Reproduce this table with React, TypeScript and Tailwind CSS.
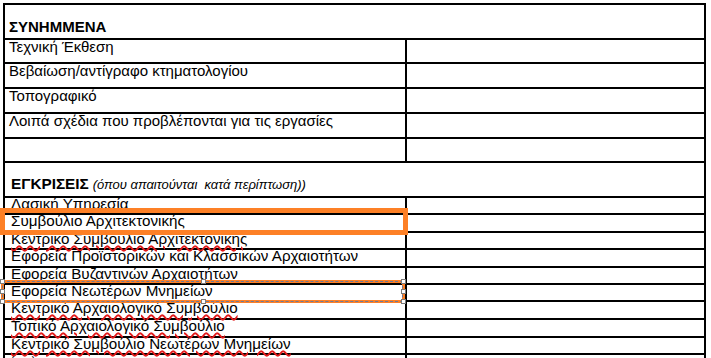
import React from "react";

const attachments = [
  { label: "Τεχνική Έκθεση", h: "h-[24px]" },
  { label: "Βεβαίωση/αντίγραφο κτηματολογίου", h: "h-[25px]" },
  { label: "Τοπογραφικό", h: "h-[25px]" },
  { label: "Λοιπά σχέδια που προβλέπονται για τις εργασίες", h: "h-[25px]" },
  { label: "", h: "h-[24px]" },
];

const approvals = [
  { label: "Δασική Υπηρεσία", h: "h-[17px]", typo: false },
  { label: "Συμβούλιο Αρχιτεκτονικής", h: "h-[18px]", typo: false },
  { label: "Κεντρικό Συμβούλιο Αρχιτεκτονικής", h: "h-[17px]", typo: true },
  { label: "Εφορεία Προϊστορικών και Κλασσικών Αρχαιοτήτων", h: "h-[18px]", typo: false },
  { label: "Εφορεία Βυζαντινών Αρχαιοτήτων", h: "h-[17px]", typo: false },
  { label: "Εφορεία Νεωτέρων Μνημείων", h: "h-[17px]", typo: false },
  { label: "Κεντρικό Αρχαιολογικό Συμβούλιο", h: "h-[18px]", typo: true },
  { label: "Τοπικό Αρχαιολογικό Συμβούλιο", h: "h-[18px]", typo: true },
  { label: "Κεντρικό Συμβούλιο Νεωτέρων Μνημείων", h: "h-[17px]", typo: true },
];

// little white squares of the selected shape
const handles = [
  "left-[0px] top-[279px]",
  "left-[201px] top-[279px]",
  "left-[401px] top-[279px]",
  "left-[0px] top-[289px]",
  "left-[401px] top-[289px]",
  "left-[0px] top-[299px]",
  "left-[201px] top-[299px]",
  "left-[401px] top-[299px]",
];

export default function App() {
  return (
    <div className="relative w-[711px] h-[358px] overflow-hidden bg-white text-black font-['Liberation_Sans',Arial,sans-serif]">
      <div className="ml-[3px] mt-[3px] w-[703px] border-x-2 border-t-2 border-black">
        {/* ΣΥΝΗΜΜΕΝΑ */}
        <div className="h-[35px] border-b-2 border-black flex items-end pl-[4px] pb-[4px]">
          <span className="text-[15px] font-bold leading-none">ΣΥΝΗΜΜΕΝΑ</span>
        </div>
        {attachments.map((row, i) => (
          <div key={i} className={`${row.h} grid grid-cols-[400px_1fr] border-b-2 border-black`}>
            <div className="pl-[4px] text-[15px] leading-[14px] whitespace-nowrap">{row.label}</div>
            <div className="border-l-2 border-black" />
          </div>
        ))}

        {/* ΕΓΚΡΙΣΕΙΣ */}
        <div className="h-[35px] border-b-2 border-black flex items-end pl-[6px] pb-[5px]">
          <span className="text-[15.3px] font-bold leading-none">ΕΓΚΡΙΣΕΙΣ</span>
          <span className="ml-[4px] text-[13px] italic leading-none whitespace-pre">
            (όπου απαιτούνται  κατά περίπτωση))
          </span>
        </div>
        {approvals.map((row, i) => (
          <div key={i} className={`${row.h} grid grid-cols-[400px_1fr] border-b-2 border-black`}>
            <div className="pl-[6px] text-[15.2px] leading-[12px] whitespace-nowrap">
              <span
                className={
                  row.typo
                    ? "underline decoration-wavy decoration-[#e21b1b] decoration-[1.5px] underline-offset-[1px]"
                    : ""
                }
              >
                {row.label}
              </span>
            </div>
            <div className="border-l-2 border-black" />
          </div>
        ))}
        <div className="h-[20px] grid grid-cols-[400px_1fr]">
          <div className="pl-[6px] pt-[1px] text-[10px] leading-[10px]">
            <span className="underline decoration-wavy decoration-[#e21b1b] decoration-[1.5px]">(ααα)</span>
          </div>
          <div className="border-l-2 border-black" />
        </div>
      </div>

      {/* highlighted row */}
      <div className="absolute left-0 top-[208px] w-[408px] h-[27px] border-[5px] border-[#fd8026]" />

      {/* selected row with dashed frame */}
      <div className="absolute left-[1px] top-[280px] w-[404px] h-[23px] border-[3px] border-[#fd8026]" />
      <div className="absolute left-[2px] top-[281px] w-[401px] h-[21px] border border-dashed border-[#6b7a99]" />
      {handles.map((pos, i) => (
        <div
          key={i}
          className={`absolute ${pos} w-[5px] h-[5px] bg-white border border-[#7a7a7a]`}
        />
      ))}
    </div>
  );
}
